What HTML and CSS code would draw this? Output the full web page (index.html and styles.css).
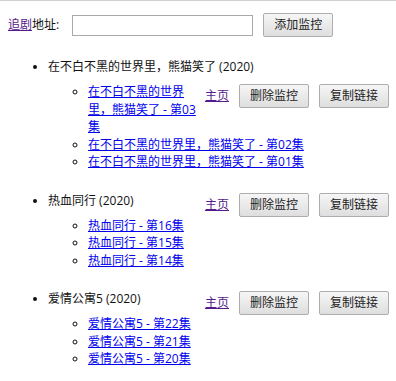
FILE: index.html
```html
<!DOCTYPE html>
<html lang="zh-CN">
  <head>
    <meta charset="UTF-8" />
    <meta name="viewport" content="width=device-width, initial-scale=1.0" />
    <title>追剧监控</title>
    <link rel="stylesheet" href="styles.css">
  </head>
  <body>
    <div class="add-row">
      <span class="label"><a href="#" class="visited">追剧</a>地址:</span>
      <input type="text" class="url-input" />
      <button class="btn">添加监控</button>
    </div>

    <ul class="shows">
      <li class="show">
        <span class="show-title">在不白不黑的世界里，熊猫笑了 (2020)</span>
        <div class="actions">
          <a href="#" class="visited">主页</a>
          <button class="btn">删除监控</button>
          <button class="btn">复制链接</button>
        </div>
        <ul class="episodes">
          <li><a href="#">在不白不黑的世界里，熊猫笑了 - 第03集</a></li>
          <li><a href="#">在不白不黑的世界里，熊猫笑了 - 第02集</a></li>
          <li><a href="#">在不白不黑的世界里，熊猫笑了 - 第01集</a></li>
        </ul>
      </li>
      <li class="show">
        <span class="show-title">热血同行 (2020)</span>
        <div class="actions">
          <a href="#" class="visited">主页</a>
          <button class="btn">删除监控</button>
          <button class="btn">复制链接</button>
        </div>
        <ul class="episodes">
          <li><a href="#">热血同行 - 第16集</a></li>
          <li><a href="#">热血同行 - 第15集</a></li>
          <li><a href="#">热血同行 - 第14集</a></li>
        </ul>
      </li>
      <li class="show">
        <span class="show-title">爱情公寓5 (2020)</span>
        <div class="actions">
          <a href="#" class="visited">主页</a>
          <button class="btn">删除监控</button>
          <button class="btn">复制链接</button>
        </div>
        <ul class="episodes">
          <li><a href="#">爱情公寓5 - 第22集</a></li>
          <li><a href="#">爱情公寓5 - 第21集</a></li>
          <li><a href="#">爱情公寓5 - 第20集</a></li>
        </ul>
      </li>
    </ul>
  </body>
</html>
```

FILE: styles.css
```css
html {
  border-top: 1px solid #cfcfcf;
}
body {
  margin: 8px 7px 8px 8px;
  font-family: "Open Sans", "Noto Sans CJK SC", sans-serif;
  font-size: 12px;
  line-height: 17.5px;
  color: #111;
  background-color: #fff;
}
a {
  color: #0000ee;
}
a.visited {
  color: #551a8b;
}
.add-row {
  display: flex;
  align-items: center;
  gap: 10px;
  padding-top: 4px;
}
.url-input {
  width: 181px;
  height: 21px;
  box-sizing: border-box;
  margin: 0 0 0 3px;
  border: 1px solid #a9a9a9;
  padding: 1px 3px;
  font-size: 12px;
}
.btn {
  font-family: "Open Sans", "Noto Sans CJK SC", sans-serif;
  font-size: 12px;
  line-height: 18px;
  padding: 2px 10px;
  margin: 0;
  color: #222;
  border: 1px solid #adadad;
  border-radius: 2px;
  background: linear-gradient(#f6f6f6, #dedede);
  cursor: pointer;
}
.shows {
  margin: 21px 0 0;
  padding-left: 40px;
}
.show + .show {
  margin-top: 21px;
}
.show-title {
  display: inline-block;
  padding-bottom: 7.5px;
}
.actions {
  float: right;
  display: flex;
  align-items: center;
  gap: 10px;
  margin-top: 1px;
}
.episodes {
  margin: 0;
  padding-left: 40px;
  list-style: circle;
}
```
